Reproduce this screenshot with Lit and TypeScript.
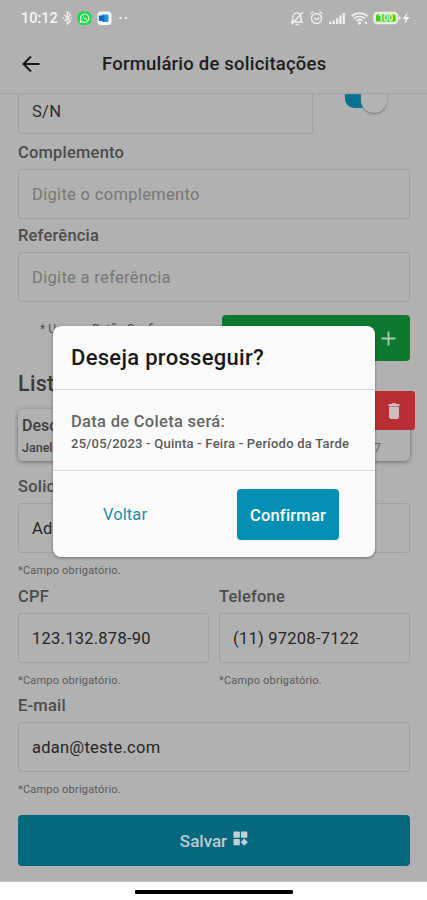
import { LitElement, html, css } from "lit";
import { customElement, property } from "lit/decorators.js";

@customElement("form-field")
class FormField extends LitElement {
  @property() label = "";
  @property() value = "";
  @property() placeholder = "";
  @property() hint = "";

  static styles = css`
    :host { display: block; min-width: 0; }
    .label { height: 20px; line-height: 20px; font-size: 16.5px; letter-spacing: 0.2px; font-weight: 500; color: #4c4c4c; white-space: nowrap; }
    .box { box-sizing: border-box; height: 50px; margin-top: 6px; border: 1.5px solid #a0a0a0; border-radius: 3px; padding-left: 13px; line-height: 50px; font-size: 16.5px; letter-spacing: 0.25px; color: #262626; white-space: nowrap; }
    .placeholder { color: #777; letter-spacing: 0.32px; }
    .hint { height: 16px; margin-top: 10px; line-height: 16px; font-size: 11px; letter-spacing: 0.2px; color: #5a5a5a; }
  `;

  render() {
    return html`
      <div class="label">${this.label}</div>
      <div class="box">${this.value || html`<span class="placeholder">${this.placeholder}</span>`}</div>
      ${this.hint ? html`<div class="hint">${this.hint}</div>` : ""}
    `;
  }
}

@customElement("confirm-dialog")
class ConfirmDialog extends LitElement {
  static styles = css`
    :host { display: flex; flex-direction: column; box-sizing: border-box; background: #fbfbfb; border-radius: 8px; box-shadow: 0 1px 3px rgba(0, 0, 0, 0.4); overflow: hidden; }
    .title { box-sizing: border-box; height: 64px; padding-left: 18px; line-height: 64px; font-size: 22px; font-weight: 500; letter-spacing: 0.3px; color: #191919; border-bottom: 1.5px solid #d8d9d9; }
    .body { box-sizing: border-box; height: 81px; padding: 21px 0 0 18px; border-bottom: 1.5px solid #d8d9d9; white-space: nowrap; }
    .lead { height: 22px; line-height: 22px; font-size: 16.5px; font-weight: 500; letter-spacing: 0.3px; color: #666; }
    .date { height: 22px; line-height: 22px; font-size: 13px; font-weight: 500; letter-spacing: 0.24px; color: #5a5a5a; }
    .actions { flex: 1; display: flex; align-items: center; justify-content: space-between; padding: 0 36px 0 50px; }
    .back { font-size: 16.5px; letter-spacing: 0.1px; color: #198fb0; }
    .confirm { width: 102px; height: 51px; line-height: 53px; text-align: center; border-radius: 4px; background: #068fb4; color: #fff; font-size: 16.5px; letter-spacing: 0.2px; font-weight: 500; }
  `;

  render() {
    return html`
      <div class="title">Deseja prosseguir?</div>
      <div class="body">
        <div class="lead">Data de Coleta será:</div>
        <div class="date">25/05/2023 - Quinta - Feira - Período da Tarde</div>
      </div>
      <div class="actions">
        <span class="back">Voltar</span>
        <div class="confirm">Confirmar</div>
      </div>
    `;
  }
}

@customElement("app-root")
class AppRoot extends LitElement {
  static styles = css`
    :host { display: flex; flex-direction: column; position: relative; width: 427px; height: 900px; overflow: hidden; background: #fff; font-family: Roboto, "Liberation Sans", sans-serif; }
    svg { display: block; flex: none; }
    .screen { height: 882px; background: #b1b1b1; display: flex; flex-direction: column; overflow: hidden; border-bottom: 1px solid #c4c4c4; box-sizing: border-box; flex: none; }
    .status { height: 36px; flex: none; box-sizing: border-box; padding: 0 12px 0 21px; display: flex; justify-content: space-between; align-items: center; color: #f5f5f5; }
    .group { display: flex; align-items: center; }
    .time { font-size: 14.5px; font-weight: 500; width: 41px; }
    .header { height: 57px; flex: none; display: flex; align-items: center; box-sizing: border-box; padding: 0 0 2px 21px; box-shadow: 0 1px 1px #a2a2a2; background: #b1b1b1; position: relative; }
    .heading { margin-left: 61px; font-size: 18.5px; font-weight: 500; color: #1e1e1e; white-space: nowrap; letter-spacing: 0.21px; }
    .form { padding: 0 17px 0 18px; display: flex; flex-direction: column; }
    .top { display: flex; justify-content: space-between; height: 41px; padding-right: 21px; }
    .number { box-sizing: border-box; width: 295px; border: 1.5px solid #a0a0a0; border-top: none; border-radius: 0 0 3px 3px; padding-left: 13px; line-height: 37px; font-size: 16.5px; letter-spacing: 0.3px; color: #2d2d2d; }
    .switch { width: 44px; height: 22px; display: flex; align-items: flex-start; }
    .track { width: 33px; height: 15px; border-radius: 0 0 8px 9px; background: #06728f; }
    .knob { width: 26px; height: 20px; margin-left: -17px; border-radius: 0 0 13px 13px; background: #b3b3b3; box-shadow: 0 1px 2px #777; }
    .complement { margin-top: 9px; }
    .reference { margin-top: 7px; }
    .add-row { margin-top: 13px; height: 46px; display: flex; justify-content: space-between; }
    .note { padding: 6px 0 0 22px; font-size: 12px; line-height: 16px; color: #4e4e4e; white-space: nowrap; }
    .add { box-sizing: border-box; width: 188px; border-radius: 4px; background: #0c792f; padding: 16px 14px 0 0; display: flex; justify-content: flex-end; }
    .list-title { height: 26px; margin-top: 10px; line-height: 26px; font-size: 21.5px; font-weight: 500; letter-spacing: 0.3px; color: #3a3a3a; }
    .card { position: relative; box-sizing: border-box; height: 52px; margin-top: 12px; padding: 6px 29px 0 4px; border-radius: 5px; background: #b1b1b1; box-shadow: 0 1px 4px rgba(0, 0, 0, 0.4); }
    .card-title { font-size: 16px; line-height: 22px; font-weight: 500; color: #3e3e3e; }
    .card-line { display: flex; justify-content: space-between; font-size: 12.5px; line-height: 21px; font-weight: 500; color: #404040; }
    .year { font-weight: 400; color: #666; }
    .trash { position: absolute; right: -5px; top: -18px; width: 60px; height: 39px; border-radius: 3px; background: #b72f35; box-sizing: border-box; display: flex; justify-content: flex-end; padding: 12px 15px 0 0; }
    .requester { margin-top: 16px; }
    .pair { margin-top: 8px; display: grid; grid-template-columns: 191px 191px; gap: 10px; }
    .email { margin-top: 7px; }
    .save { margin-top: 17px; height: 51px; flex: none; border-radius: 4px; background: #06687f; display: flex; align-items: center; justify-content: center; gap: 6px; color: #bccbd0; font-size: 17px; font-weight: 500; }
    .save svg { margin-top: -5px; }
    .home { height: 18px; display: flex; justify-content: center; padding-top: 8px; box-sizing: border-box; }
    .pill { width: 158px; height: 4px; border-radius: 1px; background: #000; }
    .dialog { position: absolute; left: 53px; top: 326px; width: 322px; height: 231px; }
  `;

  render() {
    return html`
      <div class="screen">
        <div class="status">
          <div class="group">
            <span class="time">10:12</span>
            <svg width="70" height="18" viewBox="0 0 70 18">
              <path d="M2.500 6l6 6-3.200 3v-12l3.200 3-6 6" fill="none" stroke="#eee" stroke-width="1.300" />
              <circle cx="1.500" cy="9" r=".8" fill="#eee" /><circle cx="9.500" cy="9" r=".8" fill="#eee" />
              <rect x="15.500" y="2.500" width="14" height="13.500" rx="5" fill="#1fd84b" />
              <path d="M18.200 13.500l.8-2.500a4.200 4.200 0 1 1 1.700 1.800z" fill="none" stroke="#e6ffe9" stroke-width="1.100" />
              <path d="M20.800 7.400q.8 3 3.800 3.700l.6-1.200-1.400-.7-.6.5-1.200-1.200.4-.6-.6-1.300z" fill="#e6ffe9" />
              <rect x="35.500" y="2.500" width="14" height="13.500" rx="3.500" fill="#f4f8fb" />
              <path d="M40 5.500h5.500a1 1 0 0 1 1 1v5.500a1 1 0 0 1-1 1h-5.500z" fill="#2b96df" />
              <rect x="36.800" y="6.500" width="5.500" height="5.500" rx="1" fill="#1267b9" />
              <circle cx="58.500" cy="9" r="1.200" fill="#eee" /><circle cx="64" cy="9" r="1.200" fill="#eee" />
            </svg>
          </div>
          <svg width="126" height="18" viewBox="0 0 126 18" fill="none" stroke="#eee" stroke-width="1.400">
            <path d="M2.500 13h11l-1.600-2.200V8a4 4 0 0 0-8 0v2.800zM6.500 15.500h3.200M2.500 15.500L14 3" />
            <circle cx="27.500" cy="9.500" r="5" /><path d="M21.500 5l3-2.500M33.500 5l-3-2.500M25.200 9l2.300 1.600 2.700-2" />
            <g stroke="none" fill="#eee">
              <rect x="40" y="13" width="2.300" height="2" /><rect x="43.500" y="11.500" width="2.300" height="3.500" /><rect x="47" y="9" width="2.300" height="6" /><rect x="50.300" y="6.500" width="2.300" height="8.500" /><rect x="53.600" y="4" width="2.300" height="11" />
              <circle cx="70.500" cy="14" r="1.700" /><circle cx="77" cy="14" r="1.200" />
            </g>
            <path d="M62.500 7.300a11.500 11.500 0 0 1 16 0M64.800 9.600a8.200 8.200 0 0 1 11.400 0M67.200 11.900a5 5 0 0 1 6.600 0" stroke-width="1.800" />
            <rect x="85" y="3.500" width="23.500" height="11" rx="3.500" fill="#d4f0c8" />
            <rect x="87" y="5.500" width="19.500" height="7" rx="1.500" fill="#4ccb12" stroke="none" />
            <path d="M110.500 7.500v3" stroke-width="2" />
            <text x="96.800" y="12" text-anchor="middle" font-size="8.500" font-weight="700" fill="#eaffdd" stroke="none">100</text>
            <path d="M118.500 3.500l-5 6.500h3l-1.200 5 5.200-7h-3.200z" fill="#f2f2f2" stroke="none" />
          </svg>
        </div>
        <div class="header">
          <svg width="20" height="20" viewBox="0 0 20 20" fill="none" stroke="#171717" stroke-width="2"><path d="M18.500 10H3M10 2.500L2.500 10l7.500 7.500" /></svg>
          <div class="heading">Formulário de solicitações</div>
        </div>
        <div class="form">
          <div class="top">
            <div class="number">S/N</div>
            <div class="switch"><div class="track"></div><div class="knob"></div></div>
          </div>
          <form-field class="complement" label="Complemento" placeholder="Digite o complemento"></form-field>
          <form-field class="reference" label="Referência" placeholder="Digite a referência"></form-field>
          <div class="add-row">
            <div class="note">* Usar no Botão Confirmar</div>
            <div class="add"><svg width="15" height="15" viewBox="0 0 15 15" stroke="#a9c8b0" stroke-width="1.900"><path d="M7.500 .5v14M.5 7.500h14" /></svg></div>
          </div>
          <div class="list-title">Lista</div>
          <div class="card">
            <div class="card-title">Desc</div>
            <div class="card-line"><span>Janela</span><span class="year">7</span></div>
            <div class="trash"><svg width="12" height="16" viewBox="0 0 12 16" fill="#d0bcbc"><path d="M.5 1h3l1-1h3l1 1h3v2H.5zM1 3.500h10V14a2 2 0 0 1-2 2H3a2 2 0 0 1-2-2z" /></svg></div>
          </div>
          <form-field class="requester" label="Solicitante" value="Adan" hint="*Campo obrigatório."></form-field>
          <div class="pair">
            <form-field label="CPF" value="123.132.878-90" hint="*Campo obrigatório."></form-field>
            <form-field label="Telefone" value="(11) 97208-7122" hint="*Campo obrigatório."></form-field>
          </div>
          <form-field class="email" label="E-mail" value="adan@teste.com" hint="*Campo obrigatório."></form-field>
          <div class="save">Salvar
            <svg width="15" height="15" viewBox="0 0 16 16" fill="#c3d0d4"><rect x=".5" y=".5" width="6.800" height="6.800" rx="1" /><rect x="8.500" y=".5" width="6.800" height="6.800" rx="1" /><rect x=".5" y="8.500" width="6.800" height="6.800" rx="1" /><path d="M12 8l3.800 3.900L12 15.800l-3.800-3.900z" /></svg>
          </div>
        </div>
      </div>
      <div class="home"><div class="pill"></div></div>
      <confirm-dialog class="dialog"></confirm-dialog>
    `;
  }
}
